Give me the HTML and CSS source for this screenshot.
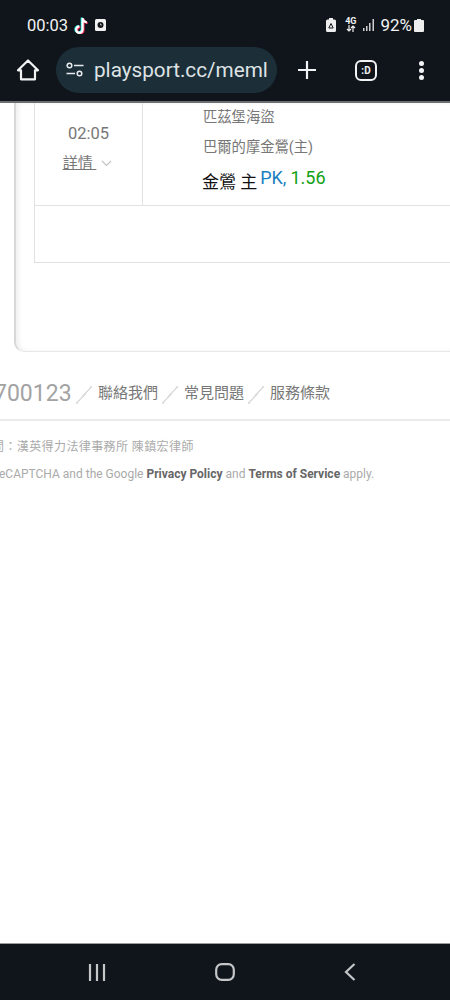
FILE: index.html
```html
<!DOCTYPE html>
<html lang="en">
<head>
    <meta charset="UTF-8">
    <meta name="viewport" content="width=device-width, initial-scale=1.0">
    <title>playsport.cc</title>
    <link rel="stylesheet" href="styles.css">
</head>
<body>
    <div class="phone">
        <header class="chrome">
            <div class="status-bar">
                <div class="status-left">
                    <span class="clock">00:03</span>
                    <svg class="tiktok" width="15" height="17" viewBox="0 0 15 17">
                        <path d="M8.600 1v11.600a3.200 3.200 0 1 1-3.200-3.200M8.600 1.200c.3 2.400 1.900 3.900 4.200 4.100" transform="translate(-.8 -.4)" fill="none" stroke="#25f4ee" stroke-width="2.200"/>
                        <path d="M8.600 1v11.600a3.200 3.200 0 1 1-3.200-3.200M8.600 1.200c.3 2.400 1.900 3.900 4.200 4.100" transform="translate(.9 .7)" fill="none" stroke="#fe2c55" stroke-width="2.200"/>
                        <path d="M8.600 1v11.600a3.200 3.200 0 1 1-3.200-3.200M8.600 1.200c.3 2.400 1.900 3.900 4.200 4.100" fill="none" stroke="#fff" stroke-width="2.200"/>
                    </svg>
                    <svg width="11" height="12" viewBox="0 0 11 12">
                        <rect width="11" height="12" rx="1.500" fill="#f2f2f2"/>
                        <circle cx="5.500" cy="6" r="3" fill="#15191e"/>
                        <path d="M5.500 4.500V6h1.400" fill="none" stroke="#f2f2f2" stroke-width=".7"/>
                    </svg>
                </div>
                <div class="status-right">
                    <svg class="saver-icon" width="10" height="14" viewBox="0 0 10 14">
                        <path d="M3 0h4v1.500h1.500q1.500 0 1.500 1.500v9.500q0 1.500-1.500 1.500h-7Q0 14 0 12.500V3q0-1.500 1.500-1.500H3z" fill="#eee"/>
                        <path d="M5 5.500 2.800 10h4.400z" fill="none" stroke="#15191e" stroke-width="1"/>
                    </svg>
                    <div class="net-type">
                        <span>4G</span>
                        <svg width="10" height="7" viewBox="0 0 10 7">
                            <path d="M3 0v6M1 4l2 2 2-2M7 7V1M5 3l2-2 2 2" fill="none" stroke="#f0f0f0" stroke-width="1.200"/>
                        </svg>
                    </div>
                    <svg class="signal-icon" width="12" height="12" viewBox="0 0 12 12">
                        <path d="M0 9h1.500v3H0zM3 7h1.500v5H3zM6 4h1.500v8H6zM9.500 0h1.500v12H9.500z" fill="#d0d0d0"/>
                    </svg>
                    <span class="battery-pct">92%</span>
                    <svg width="10" height="13" viewBox="0 0 10 13">
                        <path d="M3 0h4v1h2q1 0 1 1v10q0 1-1 1H1q-1 0-1-1V2q0-1 1-1h2z" fill="#eee"/>
                    </svg>
                </div>
            </div>
            <div class="toolbar">
                <svg class="home-icon" width="24" height="24" viewBox="0 0 24 24">
                    <path d="M12 2.500 2 12.300h3v9h14v-9h3z" fill="none" stroke="#f1f3f4" stroke-width="2.200" stroke-linejoin="round"/>
                </svg>
                <div class="omnibox">
                    <svg width="18" height="16" viewBox="0 0 18 16">
                        <circle cx="3.500" cy="3.500" r="2.300" fill="none" stroke="#e8eaed" stroke-width="1.500"/>
                        <path d="M8 3.500h9.500M.5 11.500H9" stroke="#e8eaed" stroke-width="1.500"/>
                        <circle cx="13.500" cy="11.500" r="2.300" fill="none" stroke="#e8eaed" stroke-width="1.500"/>
                    </svg>
                    <span class="url">playsport.cc/meml</span>
                </div>
                <svg class="plus-icon" width="20" height="20" viewBox="0 0 20 20">
                    <path d="M10 1v18M1 10h18" stroke="#f1f3f4" stroke-width="2.200"/>
                </svg>
                <div class="tab-count">:D</div>
                <div class="menu-dots">
                    <i></i><i></i><i></i>
                </div>
            </div>
        </header>

        <main class="page">
            <div class="card">
                <div class="game-table">
                    <div class="game-row">
                        <div class="time-cell">
                            <div class="game-time">02:05</div>
                            <div class="details">
                                <a class="details-link">詳情 </a>
                                <svg width="11" height="7" viewBox="0 0 11 7">
                                    <path d="M1 1l4.500 4.500L10 1" fill="none" stroke="#c4c4c4" stroke-width="1.200"/>
                                </svg>
                            </div>
                        </div>
                        <div class="teams-cell">
                            <div class="team">匹茲堡海盜</div>
                            <div class="team">巴爾的摩金鶯(主)</div>
                            <div class="pick">
                                <span class="pick-name">金鶯 主</span>
                                <span class="pick-type">PK,</span>
                                <span class="pick-odds">1.56</span>
                            </div>
                        </div>
                    </div>
                    <div class="empty-row"></div>
                </div>
            </div>

            <nav class="footer-links">
                <span class="phone-num">700123</span>
                <i class="slash"></i>
                <a>聯絡我們</a>
                <i class="slash"></i>
                <a>常見問題</a>
                <i class="slash"></i>
                <a>服務條款</a>
            </nav>
            <div class="legal">
                <p class="lawyer">問：漢英得力法律事務所 陳鎮宏律師</p>
                <p class="captcha">reCAPTCHA and the Google <b>Privacy Policy</b> and <b>Terms of Service</b> apply.</p>
            </div>
        </main>

        <footer class="nav-bar">
            <svg width="18" height="17" viewBox="0 0 18 17">
                <path d="M2 0v17M9 0v17M16 0v17" stroke="#c4c6c8" stroke-width="2.200"/>
            </svg>
            <svg width="20" height="18" viewBox="0 0 20 18">
                <rect x="1.200" y="1.200" width="17.600" height="15.600" rx="5.500" fill="none" stroke="#c4c6c8" stroke-width="2.200"/>
            </svg>
            <svg width="12" height="18" viewBox="0 0 12 18">
                <path d="M10.500 1 2 9l8.500 8" fill="none" stroke="#c4c6c8" stroke-width="2.200"/>
            </svg>
        </footer>
    </div>
</body>
</html>
```

FILE: styles.css
```css
html, body{
    margin: 0;
    padding: 0;
}
body{
    font-family: Roboto, "Noto Sans CJK TC", sans-serif;
    background: #fff;
}
p{
    margin: 0;
}
.phone{
    width: 450px;
    height: 1000px;
    display: flex;
    flex-direction: column;
    overflow: hidden;
}

/* browser chrome */
.chrome{
    height: 101px;
    flex: none;
    background: #10151b;
    border-bottom: 2px solid #6b6f72;
    color: #f1f3f4;
}
.status-bar{
    height: 42px;
    padding: 8px 26px 0 27px;
    box-sizing: border-box;
    display: flex;
    justify-content: space-between;
    align-items: center;
}
.status-left, .status-right{
    display: flex;
    align-items: center;
}
.status-left{
    gap: 6px;
}
.clock{
    font-size: 16.500px;
}
.net-type{
    display: flex;
    flex-direction: column;
    align-items: center;
    gap: 0;
    margin-left: 9px;
    font-size: 9px;
    line-height: 7px;
    font-weight: 700;
}
.signal-icon{
    margin-left: 7px;
}
.battery-pct{
    font-size: 17px;
    margin: 0 2px 0 5px;
}
.toolbar{
    height: 56px;
    display: flex;
    align-items: center;
    padding: 0 0 0 16px;
}
.omnibox{
    width: 221px;
    height: 46px;
    margin-left: 16px;
    padding-left: 10px;
    box-sizing: border-box;
    background: #1c2f38;
    border-radius: 23px;
    display: flex;
    align-items: center;
    gap: 10px;
    overflow: hidden;
    white-space: nowrap;
}
.url{
    font-size: 20.700px;
    color: #dfe3e6;
}
.plus-icon{
    margin-left: 20px;
}
.tab-count{
    width: 18px;
    height: 17px;
    margin-left: 38px;
    border: 2px solid #f1f3f4;
    border-radius: 6px;
    font-size: 10px;
    font-weight: 700;
    line-height: 17px;
    text-align: center;
}
.menu-dots{
    margin-left: 42px;
    display: flex;
    flex-direction: column;
    gap: 2px;
}
.menu-dots i{
    width: 5px;
    height: 5px;
    border-radius: 50%;
    background: #f1f3f4;
}

/* page content */
.page{
    flex: 1;
    min-height: 0;
    overflow: hidden;
    background: #fff;
}
.card{
    height: 249px;
    margin-left: 14px;
    padding-left: 18px;
    box-sizing: border-box;
    border-bottom: 1px solid #e8e8e8;
    border-left: 2px solid #d8d8d8;
    border-radius: 0 0 0 10px;
    box-shadow: inset 3px 0 4px #f1f1f1;
}
.game-table{
    border-left: 1px solid #e2e2e2;
    border-bottom: 1px solid #e2e2e2;
}
.game-row{
    height: 102px;
    display: flex;
    border-bottom: 1px solid #e2e2e2;
}
.time-cell{
    width: 108px;
    flex: none;
    box-sizing: border-box;
    border-right: 1px solid #e2e2e2;
    padding-top: 21px;
    text-align: center;
    color: #777;
}
.game-time{
    font-size: 16.500px;
    line-height: 20px;
}
.details{
    margin-top: 9px;
    display: flex;
    justify-content: center;
    align-items: center;
    gap: 5px;
    font-size: 15px;
    line-height: 20px;
}
.details-link{
    text-decoration: underline;
    white-space: pre;
    margin-left: -2px;
}
.teams-cell{
    padding: 4px 0 0 60px;
    color: #777;
    font-size: 14.300px;
}
.team{
    line-height: 20px;
    margin-bottom: 10px;
}
.pick{
    display: flex;
    align-items: flex-start;
    gap: 4px;
    font-size: 18px;
    line-height: 22px;
    margin-top: 2px;
}
.pick-name{
    color: #111;
    font-size: 17px;
    margin-top: 4px;
    margin-left: -1px;
}
.pick-type{
    color: #1a7fc0;
    margin-left: -1px;
}
.pick-odds{
    color: #12a012;
}
.empty-row{
    height: 56px;
}

/* footer links */
.footer-links{
    height: 69px;
    margin-left: -6px;
    box-sizing: border-box;
    padding-top: 28px;
    display: flex;
    align-items: flex-start;
    color: #777;
    font-size: 15px;
    line-height: 27px;
    border-bottom: 2px solid #eaeaea;
}
.phone-num{
    font-size: 23px;
    color: #a3a3a3;
    margin-right: .5px;
}
.slash{
    width: 16px;
    height: 18px;
    margin: 6px 6px 0 4px;
    background: linear-gradient(to bottom right, transparent 46%, #ddd 47%, #ddd 53%, transparent 54%);
}
.legal{
    color: #aaa;
    font-size: 12px;
    white-space: nowrap;
}
.lawyer{
    margin: 19px 0 0 -8px;
    line-height: 14px;
    letter-spacing: .4px;
}
.captcha{
    margin: 12px 0 0 -5px;
    line-height: 16px;
}
.captcha b{
    color: #666;
}

/* android nav */
.nav-bar{
    height: 56px;
    flex: none;
    background: #10151b;
    border-top: 1px solid #9a9c9e;
    display: flex;
    justify-content: space-between;
    align-items: center;
    padding: 0 94px 0 88px;
}
```
